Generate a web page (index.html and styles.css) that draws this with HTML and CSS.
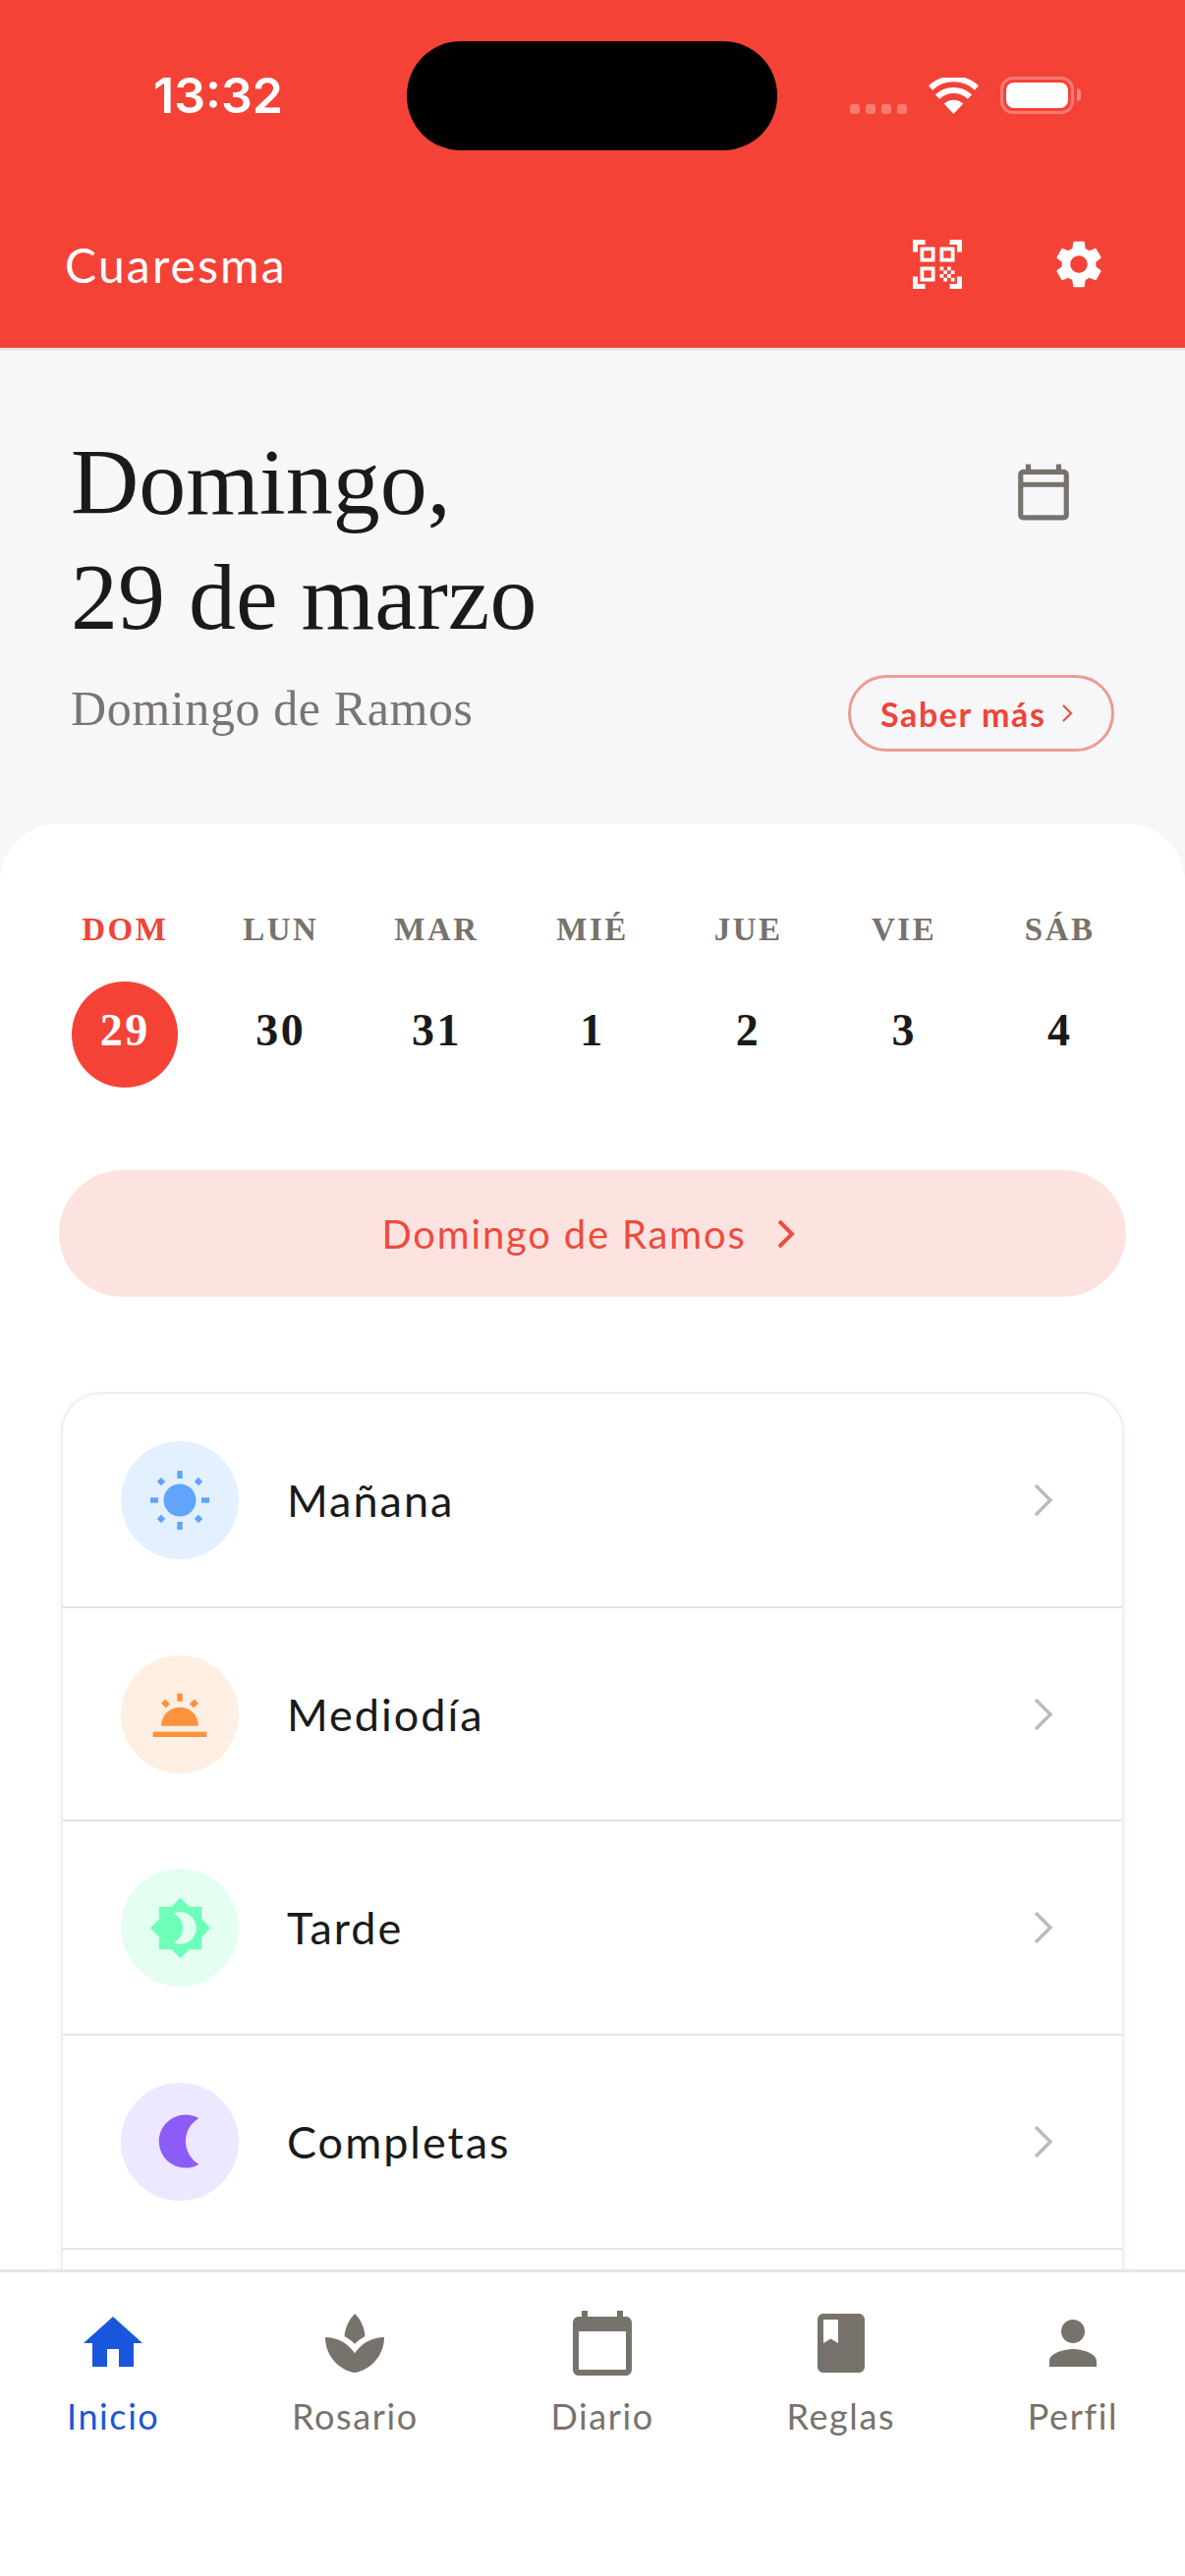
FILE: index.html
```html
<!DOCTYPE html>
<html lang="es">
<head>
    <meta charset="UTF-8">
    <meta name="viewport" content="width=device-width, initial-scale=1.0">
    <title>Cuaresma</title>
    <link rel="stylesheet" href="styles.css">
</head>
<body>
    <header class="top">
        <div class="status-bar">
            <div class="time">13:32</div>
            <div class="island"></div>
            <div class="status-icons">
                <div class="signal"><span></span><span></span><span></span><span></span></div>
                <svg class="wifi" viewBox="0 0 51 37">
                    <path d="M25.5 37 15.8 26.6a14 14 0 0 1 19.4 0z" fill="#fff"/>
                    <path d="M9 19.5a24 24 0 0 1 33 0" fill="none" stroke="#fff" stroke-width="6"/>
                    <path d="M2 10.5a34.5 34.5 0 0 1 47 0" fill="none" stroke="#fff" stroke-width="6"/>
                </svg>
                <div class="battery"><div class="battery-fill"></div></div>
            </div>
        </div>
        <div class="app-bar">
            <div class="app-title">Cuaresma</div>
            <svg class="icon-qr" viewBox="0 0 24 24"><path d="M9.5 6.5v3h-3v-3h3M11 5H5v6h6V5zm-1.5 9.5v3h-3v-3h3M11 13H5v6h6v-6zm6.5-6.5v3h-3v-3h3M19 5h-6v6h6V5zm-6 8h1.5v1.5H13V13zm1.5 1.5H16V16h-1.5v-1.5zM16 13h1.5v1.5H16V13zm-3 3h1.5v1.5H13V16zm1.5 1.5H16V19h-1.5v-1.5zM16 16h1.5v1.5H16V16zm1.5-1.5H19V16h-1.5v-1.5zm0 3H19V19h-1.5v-1.5zM22 7h-2V4h-3V2h5v5zm0 15v-5h-2v3h-3v2h5zM2 22h5v-2H4v-3H2v5zM2 2v5h2V4h3V2H2z"/></svg>
            <svg class="icon-gear" viewBox="0 0 24 24"><path d="M19.14 12.94c.04-.3.06-.61.06-.94 0-.32-.02-.64-.07-.94l2.03-1.58c.18-.14.23-.41.12-.61l-1.92-3.32c-.12-.22-.37-.29-.59-.22l-2.39.96c-.5-.38-1.03-.7-1.62-.94l-.36-2.54c-.04-.24-.24-.41-.48-.41h-3.84c-.24 0-.43.17-.47.41l-.36 2.54c-.59.24-1.13.57-1.62.94l-2.39-.96c-.22-.08-.47 0-.59.22L2.74 8.87c-.12.21-.08.47.12.61l2.03 1.58c-.05.3-.09.63-.09.94s.02.64.07.94l-2.03 1.58c-.18.14-.23.41-.12.61l1.92 3.32c.12.22.37.29.59.22l2.39-.96c.5.38 1.03.7 1.62.94l.36 2.54c.05.24.24.41.48.41h3.84c.24 0 .44-.17.47-.41l.36-2.54c.59-.24 1.13-.56 1.62-.94l2.39.96c.22.08.47 0 .59-.22l1.92-3.32c.12-.22.07-.47-.12-.61l-2.01-1.58zM12 15.6c-1.98 0-3.6-1.62-3.6-3.6s1.62-3.6 3.6-3.6 3.6 1.62 3.6 3.6-1.62 3.6-3.6 3.6z"/></svg>
        </div>
    </header>

    <main class="content">
        <section class="hero">
            <div class="hero-text">
                <h1 class="date">Domingo,<br>29 de marzo</h1>
                <div class="feast">Domingo de Ramos</div>
            </div>
            <div class="hero-side">
                <svg class="icon-calendar" viewBox="0 0 24 24"><path d="M20 3h-1V1h-2v2H7V1H5v2H4c-1.1 0-2 .9-2 2v16c0 1.1.9 2 2 2h16c1.1 0 2-.9 2-2V5c0-1.1-.9-2-2-2zm0 2v3H4V5h16zM4 21V10h16v11H4z"/></svg>
                <div class="more-btn">Saber más
                    <svg class="more-chevron" viewBox="0 0 12 20"><path d="M2 2l8 8-8 8" fill="none" stroke="#f04438" stroke-width="2"/></svg>
                </div>
            </div>
        </section>

        <section class="sheet">
            <div class="week">
                <div class="day today"><div class="day-name">DOM</div><div class="day-num">29</div></div>
                <div class="day"><div class="day-name">LUN</div><div class="day-num">30</div></div>
                <div class="day"><div class="day-name">MAR</div><div class="day-num">31</div></div>
                <div class="day"><div class="day-name">MIÉ</div><div class="day-num">1</div></div>
                <div class="day"><div class="day-name">JUE</div><div class="day-num">2</div></div>
                <div class="day"><div class="day-name">VIE</div><div class="day-num">3</div></div>
                <div class="day"><div class="day-name">SÁB</div><div class="day-num">4</div></div>
            </div>

            <div class="season-pill">Domingo de Ramos
                <svg class="pill-chevron" viewBox="0 0 20 32"><path d="M3 3l13 13L3 29" fill="none" stroke="#ee4b3e" stroke-width="4"/></svg>
            </div>

            <div class="hours">
                <div class="hour">
                    <div class="hour-icon bg-blue">
                        <svg class="glyph" viewBox="0 0 60 60" fill="#60a5fa">
                            <circle cx="30" cy="30" r="16.5"/>
                            <rect x="27.3" y="0" width="5.4" height="8"/>
                            <rect x="27.3" y="52" width="5.4" height="8"/>
                            <rect x="0" y="27.3" width="8" height="5.4"/>
                            <rect x="52" y="27.3" width="8" height="5.4"/>
                            <path d="M11 6.800 15.2 11 11 15.2 6.800 11zM49 6.800 53.2 11 49 15.2 44.800 11zM11 44.800 15.2 49 11 53.2 6.800 49zM49 44.800 53.2 49 49 53.2 44.800 49z"/>
                        </svg>
                    </div>
                    <div class="hour-name">Mañana</div>
                    <svg class="row-chevron" viewBox="0 0 24 36"><path d="M4 3l15 15L4 33" fill="none" stroke="#bdbbb8" stroke-width="3.5"/></svg>
                </div>
                <div class="hour">
                    <div class="hour-icon bg-orange">
                        <svg class="glyph" viewBox="0 0 60 60" fill="#fb923c">
                            <rect x="27.3" y="8.7" width="5.4" height="8"/>
                            <path d="M11 18.8 15.2 14.6 20 19.4 15.8 23.6zM49 18.8 44.8 14.6 40 19.4 44.2 23.6z"/>
                            <path d="M11 41.7a19 19 0 0 1 38 0z"/>
                            <rect x="2.7" y="47.7" width="54.6" height="5.3"/>
                        </svg>
                    </div>
                    <div class="hour-name">Mediodía</div>
                    <svg class="row-chevron" viewBox="0 0 24 36"><path d="M4 3l15 15L4 33" fill="none" stroke="#bdbbb8" stroke-width="3.5"/></svg>
                </div>
                <div class="hour">
                    <div class="hour-icon bg-green">
                        <svg class="glyph-lg" viewBox="0 0 24 24" fill="#6effb8"><path d="M20 8.69V4h-4.69L12 .69 8.69 4H4v4.69L.69 12 4 15.31V20h4.69L12 23.31 15.31 20H20v-4.69L23.31 12 20 8.69zM12 18c-.89 0-1.74-.2-2.5-.55C11.56 16.5 13 14.42 13 12s-1.44-4.5-3.5-5.45C10.26 6.2 11.11 6 12 6c3.31 0 6 2.69 6 6s-2.69 6-6 6z"/></svg>
                    </div>
                    <div class="hour-name">Tarde</div>
                    <svg class="row-chevron" viewBox="0 0 24 36"><path d="M4 3l15 15L4 33" fill="none" stroke="#bdbbb8" stroke-width="3.5"/></svg>
                </div>
                <div class="hour">
                    <div class="hour-icon bg-purple">
                        <svg class="glyph-lg" viewBox="0 0 24 24" fill="#8b5cf6"><path d="M14 2c1.82 0 3.53.5 5 1.35C16.01 5.08 14 8.3 14 12s2.01 6.92 5 8.65C17.53 21.5 15.82 22 14 22 8.48 22 4 17.52 4 12S8.48 2 14 2z"/></svg>
                    </div>
                    <div class="hour-name">Completas</div>
                    <svg class="row-chevron" viewBox="0 0 24 36"><path d="M4 3l15 15L4 33" fill="none" stroke="#bdbbb8" stroke-width="3.5"/></svg>
                </div>
                <div class="hour"></div>
            </div>
        </section>
    </main>

    <nav class="tabs">
        <div class="tab active">
            <svg viewBox="0 0 24 24"><path d="M10 20v-6h4v6h5v-8h3L12 3 2 12h3v8z"/></svg>
            <div class="tab-label">Inicio</div>
        </div>
        <div class="tab">
            <svg viewBox="0 0 24 24"><path d="M15.49 9.63c-.18-2.79-1.31-5.51-3.43-7.63-2.14 2.14-3.32 4.86-3.55 7.63 1.28.68 2.46 1.56 3.49 2.63 1.03-1.06 2.21-1.94 3.49-2.63zM12 15.45C9.85 12.17 6.18 10 2 10c0 5.32 3.36 9.82 8.03 11.49.63.23 1.29.4 1.97.51.68-.12 1.33-.29 1.97-.51C18.64 19.82 22 15.32 22 10c-4.18 0-7.85 2.17-10 5.45z"/></svg>
            <div class="tab-label">Rosario</div>
        </div>
        <div class="tab">
            <svg viewBox="0 0 24 24"><path d="M20 3h-1V1h-2v2H7V1H5v2H4c-1.1 0-2 .9-2 2v16c0 1.1.9 2 2 2h16c1.1 0 2-.9 2-2V5c0-1.1-.9-2-2-2zm0 18H4V8h16v13z"/></svg>
            <div class="tab-label">Diario</div>
        </div>
        <div class="tab">
            <svg viewBox="0 0 24 24"><path d="M18 2H6c-1.1 0-2 .9-2 2v16c0 1.1.9 2 2 2h12c1.1 0 2-.9 2-2V4c0-1.1-.9-2-2-2zM6 4h5v8l-2.5-1.5L6 12V4z"/></svg>
            <div class="tab-label">Reglas</div>
        </div>
        <div class="tab">
            <svg viewBox="0 0 24 24"><path d="M12 12c2.21 0 4-1.79 4-4s-1.79-4-4-4-4 1.79-4 4 1.79 4 4 4zm0 2c-2.67 0-8 1.34-8 4v2h16v-2c0-2.66-5.33-4-8-4z"/></svg>
            <div class="tab-label">Perfil</div>
        </div>
    </nav>
</body>
</html>
```

FILE: styles.css
```css
* {
    box-sizing: border-box;
}
body {
    margin: 0;
    width: 1206px;
    height: 2622px;
    overflow: hidden;
    display: flex;
    flex-direction: column;
    font-family: Lato, "Open Sans", sans-serif;
    background: #fff;
    color: #1a1a1a;
}

/* red header */
.top {
    height: 357px;
    background: #f44336;
    border-bottom: 3px solid #e8e6e4;
    flex-shrink: 0;
}
.status-bar {
    height: 194px;
    display: grid;
    grid-template-columns: 414px 377px 1fr;
    align-items: center;
}
.time {
    padding-left: 30px;
    text-align: center;
    font-family: Inter, sans-serif;
    font-size: 50px;
    font-weight: 600;
    color: #fff;
}
.island {
    height: 111px;
    background: #000;
    border-radius: 55px;
}
.status-icons {
    display: flex;
    align-items: flex-end;
    padding-left: 74px;
    height: 38px;
}
.signal {
    display: flex;
    gap: 6px;
}
.signal span {
    width: 10px;
    height: 10px;
    border-radius: 3px;
    background: rgba(255, 255, 255, 0.3);
}
.wifi {
    width: 51px;
    height: 37px;
    margin-left: 22px;
}
.battery {
    width: 75px;
    height: 38px;
    margin-left: 22px;
    padding: 3px;
    position: relative;
    border: 3px solid rgba(255, 255, 255, 0.3);
    border-radius: 13px;
}
.battery::after {
    content: '';
    position: absolute;
    right: -10px;
    top: 9px;
    width: 4px;
    height: 13px;
    border-radius: 0 4px 4px 0;
    background: rgba(255, 255, 255, 0.35);
}
.battery-fill {
    height: 100%;
    background: #fff;
    border-radius: 8px;
}
.app-bar {
    height: 152px;
    padding: 0 0 2px 66px;
    display: flex;
    align-items: center;
}
.app-title {
    flex: 1;
    font-size: 48px;
    letter-spacing: 2.2px;
    color: #fff;
}
.icon-qr {
    width: 60px;
    height: 60px;
    fill: #fff;
}
.icon-gear {
    width: 58px;
    height: 58px;
    margin: 0 79px 0 85px;
    fill: #fff;
}

.content {
    flex: 1;
    min-height: 0;
    overflow: hidden;
    background: #f7f7f9;
}

/* date block */
.hero {
    height: 481px;
    padding: 75px 72px 0 72px;
    display: flex;
    justify-content: space-between;
}
.date {
    margin: 0;
    font-family: "Liberation Serif", serif;
    font-size: 96px;
    font-weight: 400;
    line-height: 117px;
    color: #1a1a1a;
}
.feast {
    margin-top: 26px;
    font-family: "Liberation Serif", serif;
    font-size: 50px;
    letter-spacing: 0.6px;
    color: #7a7570;
}
.hero-side {
    display: flex;
    flex-direction: column;
    align-items: flex-end;
}
.icon-calendar {
    width: 62px;
    height: 62px;
    margin: 38px 41px 0 0;
    fill: #78726c;
}
.more-btn {
    width: 271px;
    height: 78px;
    margin-top: 155px;
    padding-left: 30px;
    display: flex;
    align-items: center;
    gap: 16px;
    border: 3px solid #ee9a94;
    border-radius: 39px;
    font-size: 34px;
    font-weight: 700;
    letter-spacing: 1.6px;
    color: #f04438;
}
.more-chevron {
    width: 12px;
    height: 20px;
}

/* white sheet */
.sheet {
    height: 1500px;
    padding: 0 60px;
    background: #fff;
    border-radius: 60px 60px 0 0;
}
.week {
    margin: 0 -12px;
    padding-top: 84px;
    display: grid;
    grid-template-columns: repeat(7, 1fr);
}
.day {
    display: flex;
    flex-direction: column;
    align-items: center;
}
.day-name {
    font-family: "Liberation Serif", serif;
    font-size: 33px;
    font-weight: 700;
    letter-spacing: 2.5px;
    line-height: 48px;
    color: #78726c;
}
.day-num {
    width: 108px;
    height: 108px;
    margin-top: 29px;
    font-family: "Liberation Serif", serif;
    font-size: 46px;
    font-weight: 700;
    letter-spacing: 2.5px;
    line-height: 100px;
    text-align: center;
    border-radius: 50%;
    color: #1a1a1a;
}
.today .day-name {
    color: #f04438;
}
.today .day-num {
    background: #f44336;
    color: #fff;
}
.season-pill {
    height: 129px;
    margin-top: 84px;
    padding-right: 8px;
    display: flex;
    align-items: center;
    justify-content: center;
    gap: 30px;
    background: #fde3e0;
    border-radius: 65px;
    font-size: 40px;
    letter-spacing: 1.8px;
    color: #ee4b3e;
}
.pill-chevron {
    width: 20px;
    height: 32px;
}

/* hours list */
.hours {
    margin: 97px 2px 0 2px;
    border: 2px solid #f0efee;
    border-bottom: none;
    border-radius: 40px 40px 0 0;
    box-shadow: 0 2px 8px rgba(0, 0, 0, 0.05);
}
.hour {
    height: 217.7px;
    padding: 0 68px 0 59px;
    display: flex;
    align-items: center;
    border-bottom: 2px solid #e6e5e4;
}
.hour-icon {
    width: 120px;
    height: 120px;
    border-radius: 50%;
    display: flex;
    align-items: center;
    justify-content: center;
    flex-shrink: 0;
}
.bg-blue { background: #e3f0ff; }
.bg-orange { background: #ffefe2; }
.bg-green { background: #e4fff2; }
.bg-purple { background: #ede7ff; }
.glyph {
    width: 60px;
    height: 60px;
}
.glyph-lg {
    width: 65px;
    height: 65px;
}
.hour-name {
    flex: 1;
    margin-left: 49px;
    font-size: 45px;
    letter-spacing: 2px;
    color: #1a1a1a;
}
.row-chevron {
    width: 24px;
    height: 36px;
}

/* bottom tabs */
.tabs {
    height: 312px;
    flex-shrink: 0;
    position: relative;
    padding: 36px 68px 0;
    display: flex;
    justify-content: space-between;
    align-items: flex-start;
    background: #fff;
    border-top: 3px solid #e6e5e4;
}
.tab {
    display: flex;
    flex-direction: column;
    align-items: center;
    color: #78726c;
    fill: #78726c;
}
.tab svg {
    width: 72px;
    height: 72px;
}
.tab-label {
    margin-top: 16px;
    font-size: 36px;
    letter-spacing: 1.6px;
    line-height: 44px;
}
.tab.active {
    color: #1a56db;
    fill: #1a56db;
}
```
